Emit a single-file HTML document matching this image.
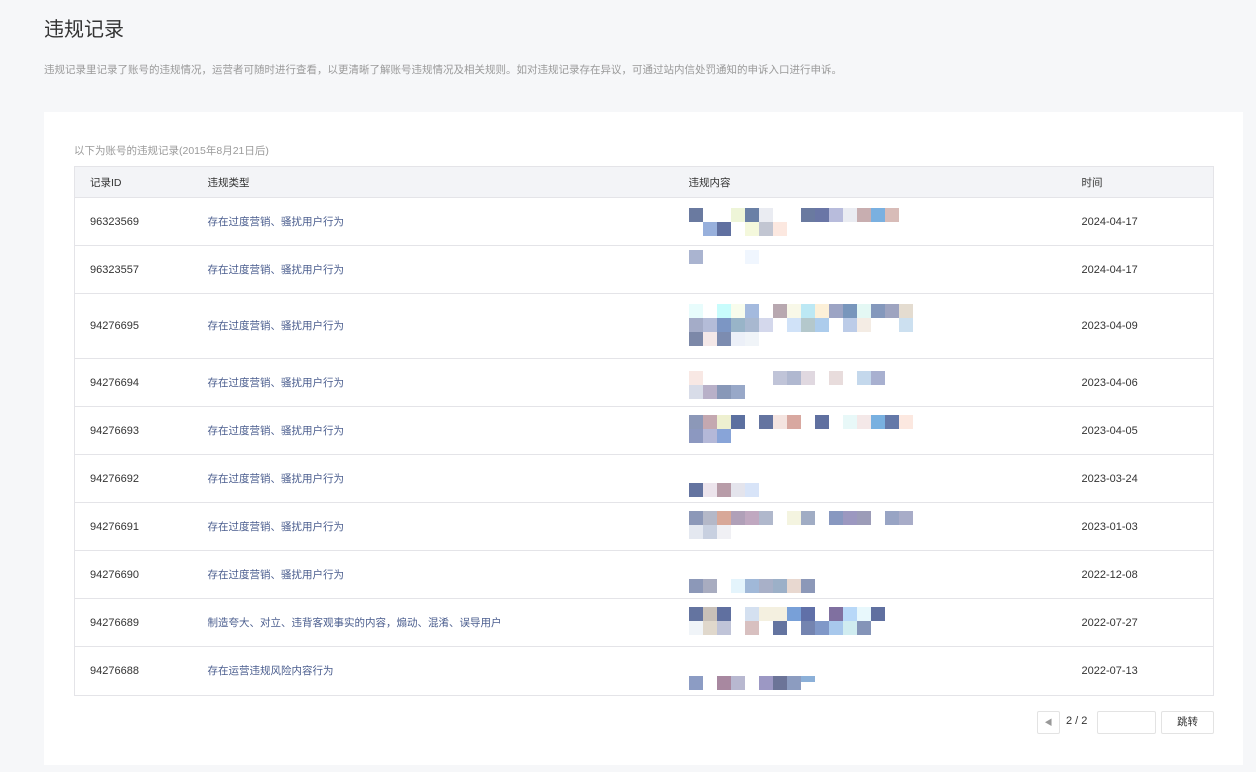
<!DOCTYPE html>
<html><head><meta charset="utf-8"><style>
body{margin:0;background:#f6f7f9;font-family:"Liberation Sans","Noto Sans CJK SC",sans-serif;width:1256px;height:772px;overflow:hidden;position:relative}
.t{position:absolute;left:44px;top:13px;font-size:20px;color:#333}
.d{position:absolute;left:44px;top:62px;font-size:10.5px;color:#9a9a9a}
.card{position:absolute;left:44px;top:112px;width:1199px;height:653px;background:#fff}
.cap{position:absolute;left:74px;top:143px;font-size:10.5px;color:#9a9a9a}
table{position:absolute;left:74px;top:166px;width:1140px;table-layout:fixed;border-collapse:collapse;border:1px solid #e4e4e8;font-size:11px;color:#333}
th{background:#f3f4f7;font-weight:normal;text-align:left;height:30px;padding:0;border-bottom:1px solid #e4e4e8;font-size:10.5px}
td{border-bottom:1px solid #e4e4e8;padding:0;position:relative;line-height:14px;vertical-align:middle}
td.ty{color:#4a5d8e;font-size:10.5px}
.c1{padding-left:15px !important}
.bl{position:absolute;left:0;width:224px}
.bl i{display:inline-block;width:14px;height:14px;float:left}
.pg{position:absolute;top:711px;height:23px;border:1px solid #e3e3e3;border-radius:2px;background:#fff;font-size:10.5px;box-sizing:border-box;text-align:center;line-height:21px;color:#333}
</style></head><body>
<div class="t">违规记录</div>
<div class="d">违规记录里记录了账号的违规情况，运营者可随时进行查看，以更清晰了解账号违规情况及相关规则。如对违规记录存在异议，可通过站内信处罚通知的申诉入口进行申诉。</div>
<div class="card"></div>
<div class="cap">以下为账号的违规记录(2015年8月21日后)</div>
<table>
<colgroup><col style="width:133px"><col style="width:481px"><col style="width:393px"><col></colgroup>
<tr><th class="c1">记录ID</th><th>违规类型</th><th>违规内容</th><th>时间</th></tr>
<tr style="height:48px"><td class="c1">96323569</td><td class="ty">存在过度营销、骚扰用户行为</td><td><div class="bl" style="top:10px"><i style="background:#6a7aa0"></i><i></i><i></i><i style="background:#eef5d8"></i><i style="background:#6a80a6"></i><i style="background:#eaecf2"></i><i></i><i></i><i style="background:#6a7aa0"></i><i style="background:#6a76a6"></i><i style="background:#b8bcdc"></i><i style="background:#eaecf2"></i><i style="background:#c8aeb0"></i><i style="background:#7ab0e0"></i><i style="background:#d8bcb8"></i><br style="clear:both"><i></i><i style="background:#98b0dc"></i><i style="background:#6070a0"></i><i></i><i style="background:#f4f8dc"></i><i style="background:#c2c6d2"></i><i style="background:#fce8e0"></i></div></td><td>2024-04-17</td></tr>
<tr style="height:48px"><td class="c1">96323557</td><td class="ty">存在过度营销、骚扰用户行为</td><td><div class="bl" style="top:4px"><i style="background:#aab4d0"></i><i></i><i></i><i></i><i style="background:#f0f6fe"></i></div></td><td>2024-04-17</td></tr>
<tr style="height:65px"><td class="c1">94276695</td><td class="ty">存在过度营销、骚扰用户行为</td><td><div class="bl" style="top:10px"><i style="background:#e8fcfc"></i><i></i><i style="background:#c8fcfc"></i><i style="background:#f8fcec"></i><i style="background:#a4bade"></i><i></i><i style="background:#b8a8b0"></i><i style="background:#f8f8e8"></i><i style="background:#bce8f4"></i><i style="background:#fcf0d8"></i><i style="background:#9ca4c4"></i><i style="background:#7896bc"></i><i style="background:#e4f8f4"></i><i style="background:#8498bc"></i><i style="background:#9ea4c0"></i><i style="background:#e4dcd0"></i><br style="clear:both"><i style="background:#a4acc8"></i><i style="background:#b4bcd8"></i><i style="background:#7c96c4"></i><i style="background:#98b4c8"></i><i style="background:#a8b8d0"></i><i style="background:#d4d8ec"></i><i></i><i style="background:#d0e2f8"></i><i style="background:#b4c8cc"></i><i style="background:#acccec"></i><i></i><i style="background:#bccce8"></i><i style="background:#f4ece4"></i><i></i><i></i><i style="background:#cce0f0"></i><br style="clear:both"><i style="background:#7c88a8"></i><i style="background:#f4e8e8"></i><i style="background:#7c8cb0"></i><i style="background:#ecf0f8"></i><i style="background:#f0f4f8"></i></div></td><td>2023-04-09</td></tr>
<tr style="height:48px"><td class="c1">94276694</td><td class="ty">存在过度营销、骚扰用户行为</td><td><div class="bl" style="top:12px"><i style="background:#f8e8e4"></i><i></i><i></i><i></i><i></i><i></i><i style="background:#c0c4d8"></i><i style="background:#b0b8d0"></i><i style="background:#e0d8e0"></i><i></i><i style="background:#e8dcdc"></i><i></i><i style="background:#c4d8ec"></i><i style="background:#a8b0d0"></i><br style="clear:both"><i style="background:#d8dce8"></i><i style="background:#b8b0c8"></i><i style="background:#8898b8"></i><i style="background:#98a8c8"></i></div></td><td>2023-04-06</td></tr>
<tr style="height:48px"><td class="c1">94276693</td><td class="ty">存在过度营销、骚扰用户行为</td><td><div class="bl" style="top:8px"><i style="background:#8c98b8"></i><i style="background:#c4a8b0"></i><i style="background:#eef0d0"></i><i style="background:#5c70a0"></i><i></i><i style="background:#6474a0"></i><i style="background:#f4e4e0"></i><i style="background:#d8a8a0"></i><i></i><i style="background:#6070a0"></i><i></i><i style="background:#e8f8f8"></i><i style="background:#f4e8e8"></i><i style="background:#78b0e0"></i><i style="background:#6478a8"></i><i style="background:#fce8e0"></i><br style="clear:both"><i style="background:#8c98c0"></i><i style="background:#b4b8d8"></i><i style="background:#88a4d8"></i></div></td><td>2023-04-05</td></tr>
<tr style="height:48px"><td class="c1">94276692</td><td class="ty">存在过度营销、骚扰用户行为</td><td><div class="bl" style="top:28px"><i style="background:#6474a0"></i><i style="background:#ece4ec"></i><i style="background:#b89ca8"></i><i style="background:#e4e4ec"></i><i style="background:#d8e4f8"></i></div></td><td>2023-03-24</td></tr>
<tr style="height:48px"><td class="c1">94276691</td><td class="ty">存在过度营销、骚扰用户行为</td><td><div class="bl" style="top:8px"><i style="background:#8c98b8"></i><i style="background:#b4b8c8"></i><i style="background:#d8a898"></i><i style="background:#b0a0b8"></i><i style="background:#c0a8c0"></i><i style="background:#b0b8cc"></i><i></i><i style="background:#f4f4e0"></i><i style="background:#a0acc4"></i><i></i><i style="background:#8898c0"></i><i style="background:#9c98c0"></i><i style="background:#9c9cb8"></i><i></i><i style="background:#98a4c4"></i><i style="background:#a8acc8"></i><br style="clear:both"><i style="background:#e4e8f0"></i><i style="background:#c8d0e0"></i><i style="background:#f0f0f4"></i></div></td><td>2023-01-03</td></tr>
<tr style="height:48px"><td class="c1">94276690</td><td class="ty">存在过度营销、骚扰用户行为</td><td><div class="bl" style="top:28px"><i style="background:#8c98b8"></i><i style="background:#a8acc0"></i><i></i><i style="background:#e4f4fc"></i><i style="background:#a0b8d8"></i><i style="background:#a8b0c8"></i><i style="background:#9cb0c8"></i><i style="background:#e8d8d0"></i><i style="background:#8c98b8"></i></div></td><td>2022-12-08</td></tr>
<tr style="height:48px"><td class="c1">94276689</td><td class="ty">制造夸大、对立、违背客观事实的内容，煽动、混淆、误导用户</td><td><div class="bl" style="top:8px"><i style="background:#6474a0"></i><i style="background:#c8c0b8"></i><i style="background:#6070a0"></i><i></i><i style="background:#d4e0f0"></i><i style="background:#f4f0e0"></i><i style="background:#f4f0e0"></i><i style="background:#78a0d8"></i><i style="background:#6070a8"></i><i></i><i style="background:#8070a0"></i><i style="background:#b8d8f8"></i><i style="background:#e8f8fc"></i><i style="background:#6070a0"></i><i></i><br style="clear:both"><i style="background:#f0f4f8"></i><i style="background:#e0d8cc"></i><i style="background:#c0c4d8"></i><i></i><i style="background:#d8c0c0"></i><i></i><i style="background:#6474a0"></i><i></i><i style="background:#7484b0"></i><i style="background:#8098c8"></i><i style="background:#a8c8ec"></i><i style="background:#d0ecf0"></i><i style="background:#8494b8"></i></div></td><td>2022-07-27</td></tr>
<tr style="height:49px"><td class="c1">94276688</td><td class="ty">存在运营违规风险内容行为</td><td><div class="bl" style="top:29px"><i style="background:#8c9cc4"></i><i></i><i style="background:#a888a0"></i><i style="background:#b8b8d0"></i><i></i><i style="background:#9c98c4"></i><i style="background:#6c7498"></i><i style="background:#8c9cc0"></i><i style="background:#8cb0d8;height:6px"></i></div></td><td>2022-07-13</td></tr>
</table>
<div class="pg" style="left:1037px;width:23px;color:#999;font-size:8px">◀</div>
<div style="position:absolute;left:1066px;top:715px;font-size:11px;color:#333">2 / 2</div>
<div class="pg" style="left:1097px;width:59px"></div>
<div class="pg" style="left:1161px;width:53px">跳转</div>
</body></html>
